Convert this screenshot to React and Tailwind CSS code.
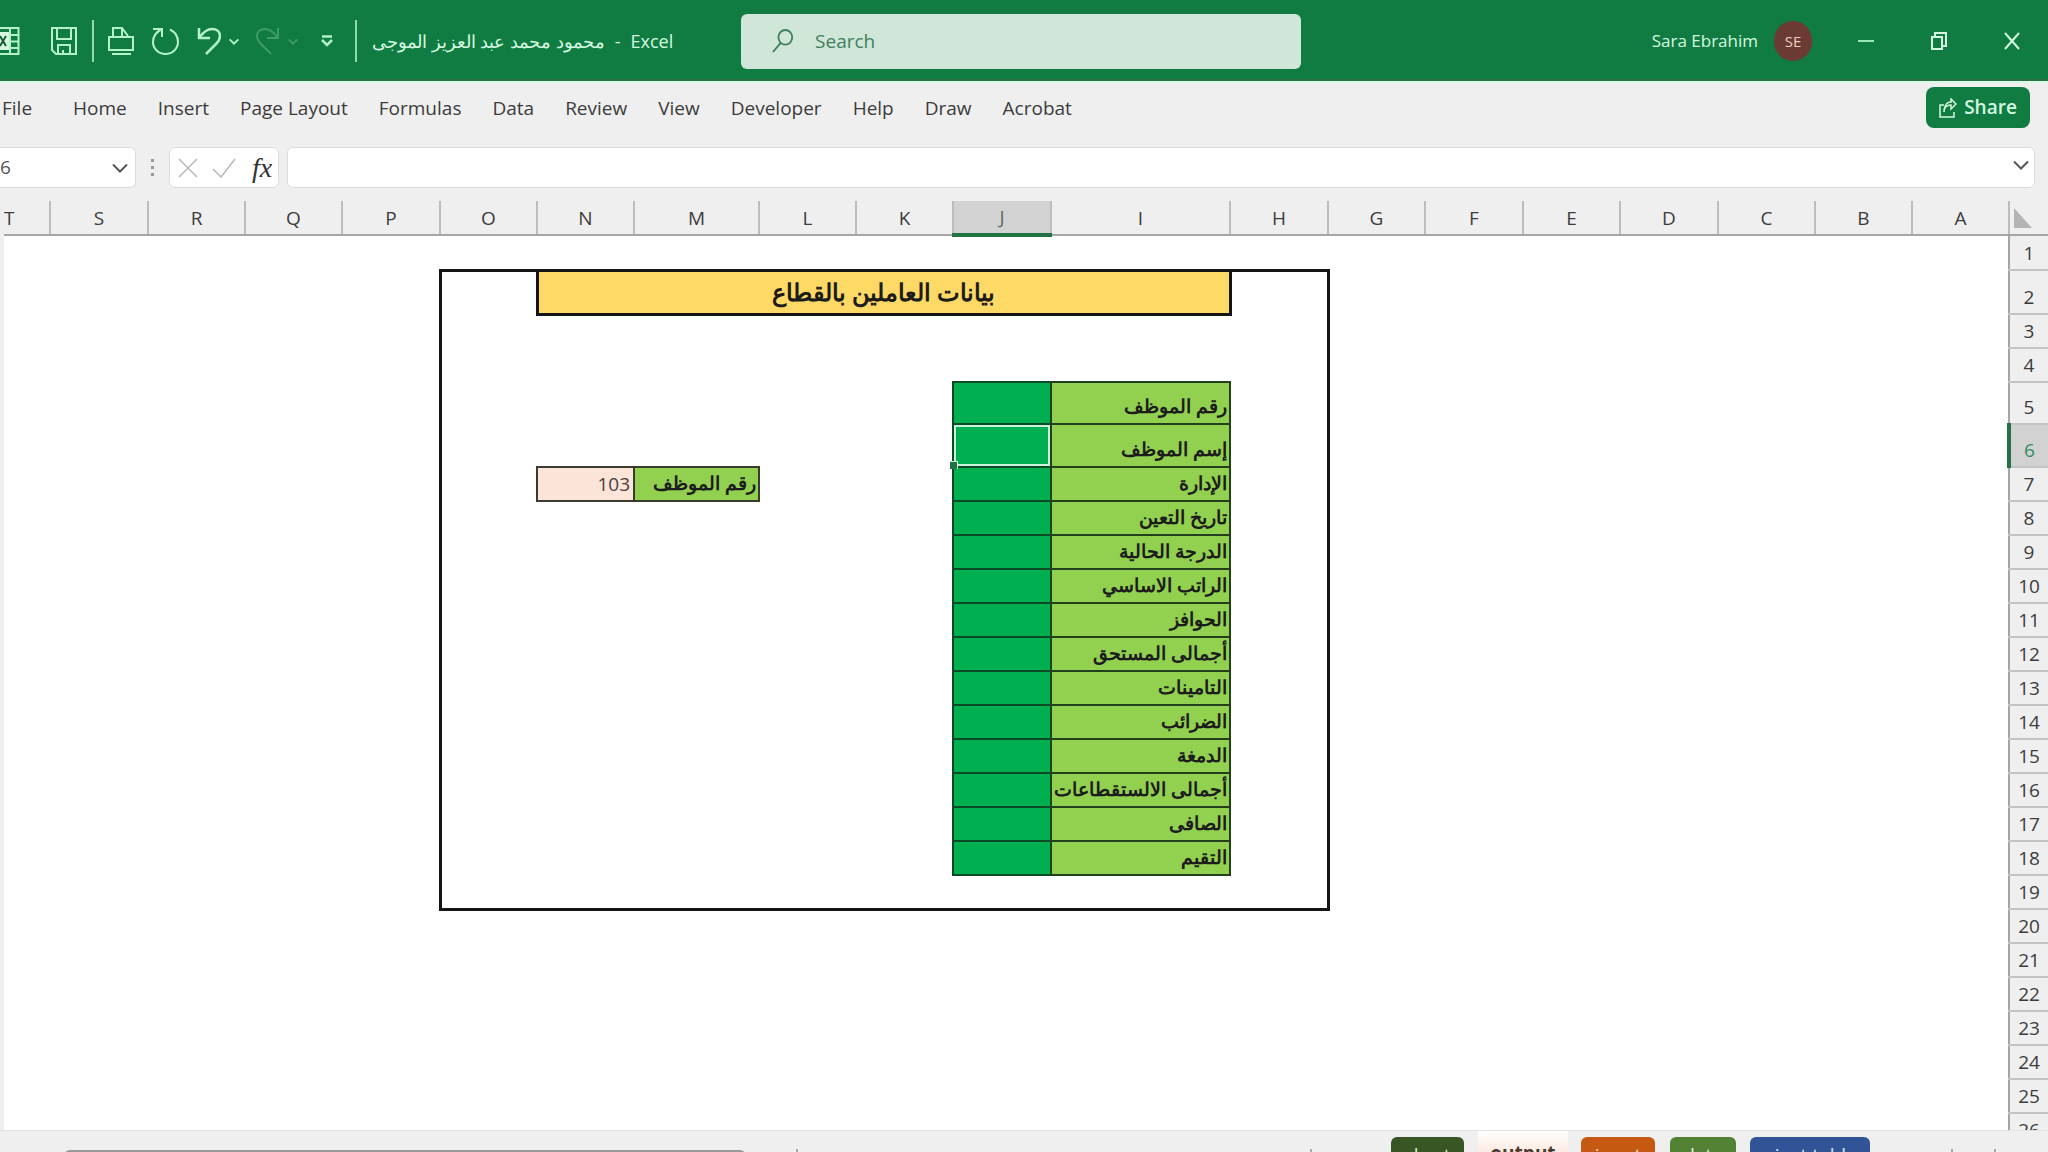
const COLUMNS = [
  { name: 'A', width: 'w-[97px]' },
  { name: 'B', width: 'w-[97px]' },
  { name: 'C', width: 'w-[97px]' },
  { name: 'D', width: 'w-[98px]' },
  { name: 'E', width: 'w-[97px]' },
  { name: 'F', width: 'w-[98px]' },
  { name: 'G', width: 'w-[97px]' },
  { name: 'H', width: 'w-[98px]' },
  { name: 'I', width: 'w-[179px]' },
  { name: 'J', width: 'w-[98px]' },
  { name: 'K', width: 'w-[97px]' },
  { name: 'L', width: 'w-[97px]' },
  { name: 'M', width: 'w-[125px]' },
  { name: 'N', width: 'w-[97px]' },
  { name: 'O', width: 'w-[97px]' },
  { name: 'P', width: 'w-[98px]' },
  { name: 'Q', width: 'w-[97px]' },
  { name: 'R', width: 'w-[97px]' },
  { name: 'S', width: 'w-[98px]' },
  { name: 'T', width: 'w-auto' },
];

const ROW_HEIGHTS = {
  1: 'h-[35px]',
  2: 'h-[44px]',
  5: 'h-[42px]',
  6: 'h-[43px]',
};

const ROWS = Array.from({ length: 26 }, (_, idx) => idx + 1);

const LABELS = {
  5: 'رقم الموظف',
  6: 'إسم الموظف',
  7: 'الإدارة',
  8: 'تاريخ التعين',
  9: 'الدرجة الحالية',
  10: 'الراتب الاساسي',
  11: 'الحوافز',
  12: 'أجمالى المستحق',
  13: 'التامينات',
  14: 'الضرائب',
  15: 'الدمغة',
  16: 'أجمالى الالستقطاعات',
  17: 'الصافى',
  18: 'التقيم',
};

const MENU = [
  'Home',
  'Insert',
  'Page Layout',
  'Formulas',
  'Data',
  'Review',
  'View',
  'Developer',
  'Help',
  'Draw',
  'Acrobat',
];

const SHEETS = [
  { name: 'chart', className: 'w-[73px] bg-[#375623] text-[#dfe8d8]' },
  { name: 'input', className: 'ml-[13px] w-[74px] bg-[#c65911] text-[#fbe3d3]' },
  { name: 'data', className: 'ml-[15px] w-[66px] bg-[#548235] text-[#e4f0dc]' },
  { name: 'pivot table', className: 'ml-[14px] w-[120px] bg-[#305496] text-[#dde6f6]' },
];

function Chevron({ className = '' }) {
  return (
    <svg viewBox="0 0 16 10" className={className} fill="none" stroke="currentColor" strokeWidth="2">
      <path d="M1 1.5 8 8.5 15 1.5" />
    </svg>
  );
}

function QuickAccess() {
  return (
    <div className="flex h-full items-center text-[#b4f3c8]">
      <svg viewBox="0 0 20 28" className="h-[28px] w-[20px]" fill="none" stroke="currentColor" strokeWidth="2">
        <path d="M0 1h18.5v26H0M0 8h18M9 14.500h10M0 21h18M10 1v26" />
        <path d="M-2 5h11v18h-11z" fill="#d7f7e1" stroke="none" />
        <path d="m0 9 6 10M6 9 0 19" stroke="#1c5b38" />
      </svg>
      <button type="button" aria-label="Save" className="ml-[31px]">
        <svg viewBox="0 0 26 28" className="h-[28px] w-[26px]" fill="none" stroke="currentColor" strokeWidth="2">
          <path d="M1 1h24v26H5l-4-4zM6 1v11h14V1M7 27v-9h12v9M12 27v-4" />
        </svg>
      </button>
      <span className="ml-[15px] h-[42px] w-[2px] bg-[#8fdcaa]" />
      <button type="button" aria-label="Print" className="ml-[14px]">
        <svg viewBox="0 0 26 28" className="h-[28px] w-[26px]" fill="none" stroke="currentColor" strokeWidth="2">
          <path d="M1 10h24v13H1zM5 10V1h9l6 8M14 1v8M4 27h19" />
        </svg>
      </button>
      <button type="button" aria-label="Refresh" className="ml-[18px]">
        <svg viewBox="0 0 27 28" className="h-[28px] w-[27px]" fill="none" stroke="currentColor" strokeWidth="2">
          <path d="M1 2h9v8M10 2C4 5 1 9 1 15a12.500 12 0 0 0 25 0c0-6-3-10-8-12.500" />
        </svg>
      </button>
      <button type="button" aria-label="Undo" className="ml-[18px]">
        <svg viewBox="0 0 24 28" className="h-[28px] w-[24px]" fill="none" stroke="currentColor" strokeWidth="2.500">
          <path d="M2 1v10h11M2 11C7 4 11 2 15 2c5 0 8 3 8 7 0 3-2 6-4 8L9 27" />
        </svg>
      </button>
      <Chevron className="ml-[8px] h-[7px] w-[10px] stroke-3" />
      <div className="ml-[17px] flex items-center text-[#3f9c66]">
        <svg viewBox="0 0 24 28" className="h-[28px] w-[24px]" fill="none" stroke="currentColor" strokeWidth="2">
          <path d="M22 1v10H11M22 11C17 4 13 2 9 2 4 2 1 5 1 9c0 3 2 6 4 8l10 10" />
        </svg>
        <Chevron className="ml-[8px] h-[7px] w-[10px] stroke-3" />
      </div>
      <button type="button" aria-label="Customize toolbar" className="ml-[23px]">
        <svg viewBox="0 0 12 12" className="h-[12px] w-[12px]" fill="none" stroke="currentColor" strokeWidth="2.500">
          <path d="M1 1.500h10M1 5l5 5 5-5" />
        </svg>
      </button>
      <span className="ml-[22px] h-[42px] w-[2px] bg-[#8fdcaa]" />
    </div>
  );
}

function TitleBar() {
  return (
    <header className="flex h-[81px] shrink-0 items-center border-b-2 border-[#2a7048] bg-[#107c41] pt-[3px] text-[18px] text-[#d5f9e0]">
      <div className="flex h-full w-[741px] shrink-0 items-center">
        <QuickAccess />
        <h1 className="ml-[15px] whitespace-nowrap">
          <bdi>محمود محمد عبد العزيز الموجى</bdi>
          <span className="mx-[10px]">-</span>
          Excel
        </h1>
      </div>
      <label className="flex h-[55px] w-[560px] items-center rounded-md bg-[#cfe6d9] pl-[31px] text-[#3f7f5c]">
        <svg viewBox="0 0 24 26" className="h-[26px] w-[24px]" fill="none" stroke="currentColor" strokeWidth="2">
          <ellipse cx="14.500" cy="9" rx="7.500" ry="8" />
          <path d="M9.500 15 1 25" />
        </svg>
        <input
          aria-label="Search"
          placeholder="Search"
          className="ml-[21px] w-full bg-transparent text-[19px] outline-none placeholder:text-[#3f7f5c]"
        />
      </label>
      <div className="ml-auto flex items-center">
        <span className="text-[17px]">Sara Ebrahim</span>
        <span className="mr-[17px] ml-[16px] flex h-[40px] w-[38px] items-center justify-center rounded-full bg-[#6b3a32] text-[15px] text-[#e8cfc8]">
          SE
        </span>
        <button type="button" aria-label="Minimize" className="flex w-[73px] justify-center">
          <span className="h-[2px] w-[16px] bg-[#9be8b4]" />
        </button>
        <button type="button" aria-label="Restore" className="flex w-[73px] justify-center">
          <svg viewBox="0 0 16 18" className="h-[18px] w-[16px]" fill="none" stroke="currentColor" strokeWidth="2">
            <path d="M1 5h10v12H1zM4 5V1h11v13h-4" />
          </svg>
        </button>
        <button type="button" aria-label="Close" className="flex w-[73px] justify-center">
          <svg viewBox="0 0 16 18" className="h-[18px] w-[16px]" fill="none" stroke="currentColor" strokeWidth="2">
            <path d="m1 1 14 16M15 1 1 17" />
          </svg>
        </button>
      </div>
    </header>
  );
}

function MenuBar() {
  return (
    <nav className="flex h-[66px] shrink-0 items-start border-t-2 border-[#d9fbe3] pt-[4px] text-[19px] text-[#3c3c3c]">
      <button type="button" className="mr-[41px] ml-[2px] h-[42px]">File</button>
      <div className="flex h-[42px] gap-[31px]">
        {MENU.map((item) => (
          <button key={item} type="button" className="whitespace-nowrap">
            {item}
          </button>
        ))}
      </div>
      <button
        type="button"
        className="mr-[18px] ml-auto flex h-[41px] w-[104px] items-center justify-center gap-[7px] rounded-lg bg-[#107c41] font-semibold text-[#d5f9e0]"
      >
        <svg viewBox="0 0 18 20" className="h-[20px] w-[18px]" fill="none" stroke="currentColor" strokeWidth="1.500">
          <path d="M5 7H1v12h14v-5M5 14c0-5 2-7 7-7v4l5-5-5-5v3C7 4 5 9 5 14z" />
        </svg>
        Share
      </button>
    </nav>
  );
}

function FormulaBar() {
  return (
    <div className="flex h-[41px] shrink-0 items-stretch text-[#555]">
      <label className="flex w-[136px] items-center rounded-r-md border border-l-0 border-[#dcdcdc] bg-white pr-[7px]">
        <input aria-label="Name box" defaultValue="6" className="w-full text-[19px] outline-none" />
        <Chevron className="h-[10px] w-[16px] shrink-0" />
      </label>
      <div className="flex w-[33px] flex-col items-center justify-center gap-[4px]">
        <span className="size-[3px] bg-[#999]" />
        <span className="size-[3px] bg-[#999]" />
        <span className="size-[3px] bg-[#999]" />
      </div>
      <div className="flex w-[110px] items-center rounded-md border border-[#dcdcdc] bg-white pl-[8px] text-[#b9b9b9]">
        <button type="button" aria-label="Cancel">
          <svg viewBox="0 0 20 20" className="size-[20px]" fill="none" stroke="currentColor" strokeWidth="1.500">
            <path d="m1 1 18 18M19 1 1 19" />
          </svg>
        </button>
        <button type="button" aria-label="Enter" className="ml-[14px]">
          <svg viewBox="0 0 24 20" className="h-[20px] w-[24px]" fill="none" stroke="currentColor" strokeWidth="1.500">
            <path d="m1 11 8 8L23 1" />
          </svg>
        </button>
        <button
          type="button"
          aria-label="Insert function"
          className="ml-[16px] font-['Liberation_Serif',serif] text-[28px] leading-[30px] text-[#333] italic"
        >
          fx
        </button>
      </div>
      <label className="mr-[13px] ml-[8px] flex grow items-center rounded-md border border-[#dcdcdc] bg-white pr-[5px]">
        <input aria-label="Formula" className="w-full pl-2 text-[19px] outline-none" />
        <Chevron className="mb-[6px] h-[10px] w-[16px] shrink-0" />
      </label>
    </div>
  );
}

// thick outline that runs round H2:O19
function frameClass(col, row) {
  const inside = row >= 2 && row <= 19;
  return [
    inside && col === 'H' ? 'border-r-3 border-r-[#151515]' : '',
    inside && col === 'O' ? 'border-l-3 border-l-[#151515]' : '',
    row === 2 && col >= 'H' && col <= 'O' ? 'border-t-3 border-t-[#151515]' : '',
    row === 19 && col >= 'H' && col <= 'O' ? 'border-b-3 border-b-[#151515]' : '',
  ].join(' ');
}

function Cell({ col, row }) {
  if (row === 2 && col === 'I') {
    return (
      <td
        colSpan={6}
        className="border-3 border-[#151515] bg-[#ffd966] p-0 text-center align-middle text-[24px] leading-[34px] font-semibold"
      >
        بيانات العاملين بالقطاع
      </td>
    );
  }
  if (col === 'I' && LABELS[row]) {
    return (
      <td className="border-2 border-[#21401b] bg-[#92d050] px-[2px] pt-0 pb-[3px] align-bottom text-[19px] leading-[28px] font-bold whitespace-nowrap">
        {LABELS[row]}
      </td>
    );
  }
  if (col === 'J' && LABELS[row]) {
    return (
      <td className="border-2 border-[#0b4a26] bg-[#00b050] p-0">
        {row === 6 && (
          <div className="relative h-[41px] border-2 border-[#c9f2d6]">
            <span className="absolute -bottom-[5px] -left-[6px] size-[8px] border-t border-r border-[#c9f2d6] bg-[#217346]" />
          </div>
        )}
      </td>
    );
  }
  if (row === 7 && col === 'M') {
    return (
      <td className="border-2 border-[#3a3a2e] bg-[#92d050] px-[2px] pt-0 pb-[3px] align-bottom text-[19px] leading-[28px] font-bold whitespace-nowrap">
        رقم الموظف
      </td>
    );
  }
  if (row === 7 && col === 'N') {
    return (
      <td
        dir="ltr"
        className="border-2 border-[#3a3a2e] bg-[#fce4d9] px-[3px] pt-0 pb-[2px] text-right align-bottom text-[19px] leading-[28px] font-medium text-[#4a4040]"
      >
        103
      </td>
    );
  }
  return <td className={`p-0 ${frameClass(col, row)}`} />;
}

function Sheet() {
  return (
    <main className="mt-[13px] min-h-0 grow overflow-hidden border-l-4 border-[#efefef]">
      <table dir="rtl" className="w-full table-fixed border-collapse bg-white text-[#1c1c1c]">
        <colgroup>
          <col className="w-[39px]" />
          {COLUMNS.map(({ name, width }) => (
            <col key={name} className={width} />
          ))}
        </colgroup>
        <thead>
          <tr className="h-[34px] bg-[#efefef] text-[19px] leading-[30px] text-[#3c3c3c]">
            <th aria-label="Select all" className="border-b-2 border-l-2 border-b-[#a6a6a6] border-l-[#bdbdbd] p-0">
              <svg viewBox="0 0 18 20" className="mr-auto ml-[4px] h-[20px] w-[18px]" fill="#b4b4b4">
                <path d="M0 0v20h18z" />
              </svg>
            </th>
            {COLUMNS.map(({ name }) => (
              <th
                key={name}
                scope="col"
                className={`p-0 font-medium ${
                  name === 'J'
                    ? 'border-b-4 border-[#217346] bg-[#d2d2d2] text-[#5b6f64]'
                    : 'border-b-2 border-b-[#a6a6a6] border-l-[#bdbdbd]'
                } ${name === 'T' ? 'text-left' : 'border-l-2 border-l-[#bdbdbd] text-center'}`}
              >
                {name}
              </th>
            ))}
          </tr>
        </thead>
        <tbody>
          {ROWS.map((row) => (
            <tr key={row} className={ROW_HEIGHTS[row] ?? 'h-[34px]'}>
              <th
                scope="row"
                className={`border-b-2 border-b-[#c4c4c4] px-0 pt-0 pb-[2px] text-center align-bottom text-[19px] leading-[28px] font-medium ${
                  row === 6
                    ? 'border-l-4 border-l-[#217346] bg-[#d2d2d2] text-[#2f8f5f]'
                    : 'border-l-2 border-l-[#a6a6a6] bg-[#efefef] text-[#3c3c3c]'
                }`}
              >
                {row}
              </th>
              {COLUMNS.filter(({ name }) => row !== 2 || name < 'J' || name > 'N').map(({ name }) => (
                <Cell key={name} col={name} row={row} />
              ))}
            </tr>
          ))}
        </tbody>
      </table>
    </main>
  );
}

function SheetTabs() {
  const [first, ...rest] = SHEETS;
  const tab = 'mt-[6px] h-[34px] rounded-t-md text-[19px] leading-[36px] whitespace-nowrap';

  return (
    <footer className="flex h-[22px] shrink-0 items-start overflow-hidden border-t border-[#e2e2e2] bg-[#efefef]">
      <div className="mt-[19px] ml-[64px] h-[16px] w-[682px] shrink-0 rounded-md bg-[#999]" />
      <span className="mt-[18px] ml-[50px] h-[10px] w-[2px] bg-[#aaa]" />
      <div className="mr-[52px] ml-auto flex shrink-0 items-start">
        <span className="mt-[18px] mr-[79px] h-[10px] w-[2px] bg-[#aaa]" />
        <button type="button" className={`${tab} ${first.className}`}>{first.name}</button>
        <button
          type="button"
          className="ml-[14px] h-[40px] w-[90px] bg-linear-to-b from-white to-[#f8d9c5] pt-[3px] text-[19px] leading-[36px] font-bold text-[#4a3a30]"
        >
          output
        </button>
        {rest.map(({ name, className }) => (
          <button key={name} type="button" className={`${tab} ${className}`}>
            {name}
          </button>
        ))}
        <span className="mt-[18px] ml-[81px] h-[10px] w-[2px] bg-[#aaa]" />
        <span className="mt-[18px] ml-[41px] h-[10px] w-[2px] bg-[#aaa]" />
      </div>
    </footer>
  );
}

export default function App() {
  return (
    <div className="flex h-screen flex-col overflow-hidden bg-[#efefef] font-['Open_Sans','Noto_Sans',sans-serif]">
      <TitleBar />
      <MenuBar />
      <FormulaBar />
      <Sheet />
      <SheetTabs />
    </div>
  );
}
